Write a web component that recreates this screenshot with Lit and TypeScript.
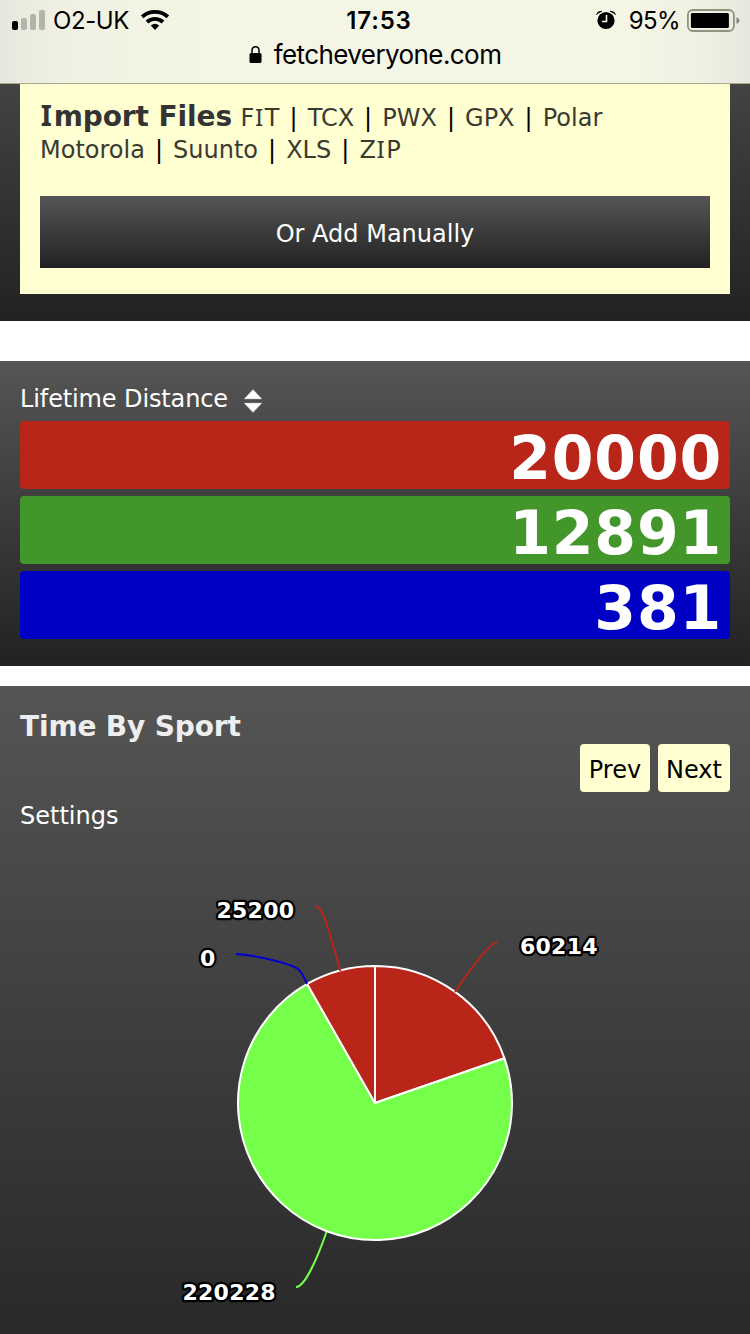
import { LitElement, html, svg, css } from "lit";
import { customElement } from "lit/decorators.js";

@customElement("status-header")
class StatusHeader extends LitElement {
  static styles = css`
    :host { display: block; height: 83px; box-sizing: content-box; border-bottom: 1px solid #a9a98c; color: #000;
      font-family: Inter, "Liberation Sans", sans-serif; font-size: 24px;
      background: linear-gradient(90deg, #e6e6df 0, #ecece1 28px, #f2f2e4 90px, #f5f5e5 200px, #f5f5e6 640px, #f0f0e3 700px, #e7e7df 750px); }
    .row { display: grid; grid-template-columns: 1fr auto 1fr; height: 40px; padding: 0 12px; align-items: center; }
    .left, .right { display: flex; align-items: center; height: 40px; }
    .right { justify-content: flex-end; margin-right: -2px; }
    .time, .carrier, .pct { padding-top: 2px; }
    .time { font-weight: 600; letter-spacing: 0.85px; padding-left: 8px; }
    .carrier { margin-left: 7px; letter-spacing: -0.4px; width: 88px; white-space: nowrap; }
    .pct { margin: 0 7px 0 13px; letter-spacing: -0.6px; }
    .url { display: flex; justify-content: center; align-items: center; gap: 12px; height: 30px; font-size: 26px; letter-spacing: -0.58px; }
    svg { display: block; flex: none; }
  `;
  render() {
    return html`
      <div class="row">
        <div class="left">
          <svg width="34" height="40" viewBox="0 0 34 40">
            <rect x="0" y="21" width="6" height="9" rx="2" />
            <g fill="#b4b4a9">
              <rect x="9" y="18" width="6" height="12" rx="2" />
              <rect x="18" y="14" width="6" height="16" rx="2" />
              <rect x="27" y="10" width="6" height="20" rx="2" />
            </g>
          </svg>
          <span class="carrier">O2-UK</span>
          <svg width="28" height="40" viewBox="0 0 28 40">
            <g fill="none" stroke="#000" stroke-width="3.8">
              <path d="M1.2 16.8 C8.5 10.2 19.5 10.2 26.8 16.8" />
              <path d="M6 22 C10.6 17.8 17.4 17.8 22 22" />
            </g>
            <path d="M9.8 25.4 Q14 22 18.2 25.4 L14 30 Z" />
          </svg>
        </div>
        <span class="time">17:53</span>
        <div class="right">
          <svg width="20" height="40" viewBox="0 0 20 40">
            <circle cx="10" cy="20.5" r="8.6" />
            <path d="M0.5 14.5 Q1.5 11 6 11.2 Q2.5 12.5 0.5 14.5 Z M19.5 14.5 Q18.5 11 14 11.2 Q17.5 12.5 19.5 14.5 Z" stroke="#000" stroke-width="0.8" />
            <path d="M10.5 15 V21.5 H6" fill="none" stroke="#f5f5e5" stroke-width="1.6" />
          </svg>
          <span class="pct">95%</span>
          <svg width="53" height="40" viewBox="0 0 53 40">
            <rect x="0.9" y="10" width="46" height="21" rx="5" fill="none" stroke="#92927f" stroke-width="1.8" />
            <rect x="3.9" y="13" width="38" height="15" rx="1.5" />
            <path d="M49.5 17 Q52.5 18.5 52.5 20.5 Q52.5 22.5 49.5 24 Z" fill="#85857a" />
          </svg>
        </div>
      </div>
      <div class="url">
        <svg width="13" height="30" viewBox="0 0 13 30">
          <rect x="0.5" y="13" width="12" height="10" rx="1.6" />
          <path d="M3 14 V10.5 C3 5.5 10 5.5 10 10.5 V14" fill="none" stroke="#000" stroke-width="1.5" />
        </svg>
        <span>fetcheveryone.com</span>
      </div>`;
  }
}

const CX = 375, CY = 417, R = 137;
const slices = [
  { value: 60214, color: "#b92619" },
  { value: 220228, color: "#75ff4b" },
  { value: 25200, color: "#b92619" },
];
const labels = [
  { text: "25200", x: 216.5, y: 232, color: "#b92619", line: "M315 220 C323 219 329 246 340.5 285" },
  { text: "0", x: 200, y: 280, color: "#0000d0", line: "M236 268 C254 269 296 278 300 285 Q303.5 289.5 307 298" },
  { text: "60214", x: 520, y: 268, color: "#b92619", line: "M498 256 C490 256 473 279 455 306" },
  { text: "220228", x: 182.5, y: 614, color: "#75ff4b", line: "M296 601 C304 601 316 576 326.5 546" },
];

@customElement("sport-pie")
class SportPie extends LitElement {
  static styles = css`
    :host { display: block; }
    svg { display: block; }
    .label { font: bold 22px "DejaVu Sans", sans-serif; letter-spacing: 0.25px; fill: #fff; stroke: #000;
      stroke-width: 4.5px; stroke-linejoin: round; paint-order: stroke; }
  `;
  render() {
    const total = slices.reduce((s, d) => s + d.value, 0);
    let angle = 0;
    const paths = slices.map((d) => {
      const next = angle + (d.value / total) * Math.PI * 2;
      const p = (a: number) => `${CX + R * Math.sin(a)} ${CY - R * Math.cos(a)}`;
      const path = `M${CX} ${CY} L${p(angle)} A${R} ${R} 0 ${next - angle > Math.PI ? 1 : 0} 1 ${p(next)} Z`;
      angle = next;
      return svg`<path d=${path} fill=${d.color} stroke="#fff" stroke-width="2" stroke-linejoin="round"/>`;
    });
    return html`<svg width="750" height="498" viewBox="0 150 750 498">
      ${paths}
      ${labels.map((l) => svg`<path d=${l.line} fill="none" stroke=${l.color} stroke-width="2"/>
        <text class="label" x=${l.x} y=${l.y}>${l.text}</text>`)}
    </svg>`;
  }
}

@customElement("app-root")
class AppRoot extends LitElement {
  static styles = css`
    :host { display: block; width: 750px; height: 1334px; overflow: hidden; background: #fff;
      font-family: "DejaVu Sans", sans-serif; font-size: 24px; line-height: 32px; color: #fff; }
    .import { height: 210px; padding: 0 20px 27px; background: linear-gradient(#434343, #222); }
    .box { height: 210px; box-sizing: border-box; padding: 17px 20px 26px; background: #ffffd1; color: #000; display: flex; flex-direction: column; justify-content: space-between; }
    .files { height: 65px; white-space: nowrap; }
    .line { height: 32px; white-space: pre; word-spacing: 2.4px; }
    .first { height: 33px; }
    .title { font-size: 28px; font-weight: bold; line-height: 26px; color: #333; word-spacing: 0; letter-spacing: -0.1px; margin-right: -1.5px; }
    .fmt { color: #3a3a30; }
    .i { font-family: "Noto Sans", sans-serif; font-size: 1.02em; line-height: 1; letter-spacing: 0.06em; margin-left: 0.03em; }
    .manual { height: 72px; line-height: 76px; text-align: center; color: #fff; background: linear-gradient(#555, #222); }
    .lifetime { margin-top: 40px; height: 305px; box-sizing: border-box; padding: 20px 20px 0; background: linear-gradient(#555, #222); }
    .head { display: flex; height: 40px; line-height: 37px; gap: 15px; letter-spacing: -0.12px; }
    .bars { display: grid; gap: 7px; }
    .bar { height: 68px; line-height: 75px; box-sizing: border-box; border-radius: 4px; padding-right: 8px; text-align: right; font-size: 60px; font-weight: bold; letter-spacing: 0.8px; }
    .red { background: #b92619; }
    .green { background: #43962a; }
    .blue { background: #0000c4; }
    .sport { margin-top: 20px; height: 648px; background: linear-gradient(#555, #292929); }
    .intro { height: 150px; box-sizing: border-box; padding: 24px 20px 0; }
    h2 { margin: 0; font-size: 28px; line-height: 34px; height: 34px; color: #eee; letter-spacing: -0.15px; }
    .nav { display: flex; justify-content: flex-end; gap: 8px; height: 48px; }
    .btn { background: #ffffd1; color: #000; border-radius: 4px; line-height: 52px; text-align: center; width: 70px; }
    .next { width: 72px; }
    .settings { margin-top: 8px; }
  `;
  render() {
    const I = html`<span class="i">I</span>`;
    return html`
      <status-header></status-header>
      <section class="import">
        <div class="box">
          <div class="files">
            <div class="line first"><span class="title">${I}mport Files</span> <span class="fmt">F${I}T</span> | <span class="fmt">TCX</span> | <span class="fmt">PWX</span> | <span class="fmt">GPX</span> | <span class="fmt">Polar</span></div>
            <div class="line"><span class="fmt">Motorola</span> | <span class="fmt">Suunto</span> | <span class="fmt">XLS</span> | <span class="fmt">Z${I}P</span></div>
          </div>
          <div class="manual">Or Add Manually</div>
        </div>
      </section>
      <section class="lifetime">
        <div class="head"><span>Lifetime Distance</span>
          <svg width="20" height="40" viewBox="0 0 20 40"><path d="M10 8.5 L19 18 H1 Z M1 22 H19 L10 31.5 Z" fill="#fff" stroke="#aaa" stroke-width="0.5"/></svg>
        </div>
        <div class="bars">
          <div class="bar red">20000</div>
          <div class="bar green">12891</div>
          <div class="bar blue">381</div>
        </div>
      </section>
      <section class="sport">
        <div class="intro">
          <h2>Time By Sport</h2>
          <div class="nav"><span class="btn">Prev</span><span class="btn next">Next</span></div>
          <div class="settings">Settings</div>
        </div>
        <sport-pie></sport-pie>
      </section>`;
  }
}
